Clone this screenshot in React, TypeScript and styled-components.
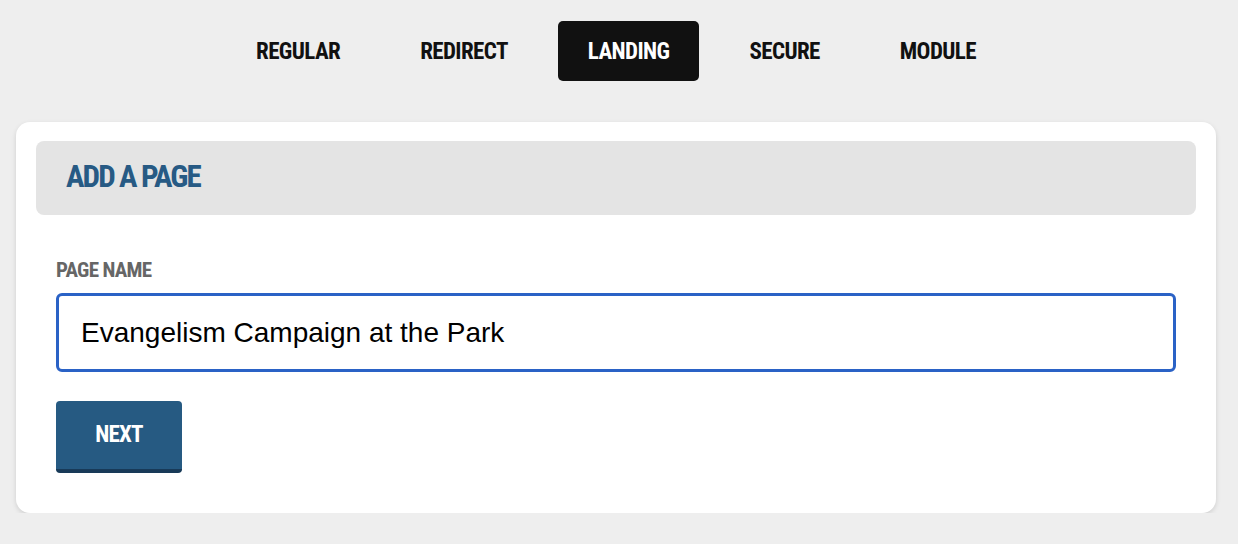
import React, { useEffect, useRef } from "react";
import styled, { createGlobalStyle } from "styled-components";

const GlobalStyle = createGlobalStyle`
  * { box-sizing: border-box; }
  body {
    margin: 0;
    background: #eeeeee;
    font-family: "Roboto Condensed", "Liberation Sans", sans-serif;
  }
`;

const Page = styled.div`
  display: flex;
  flex-direction: column;
  padding: 21px 22px 0 16px;
`;

const TabBar = styled.nav`
  display: flex;
  justify-content: center;
  gap: 20px;
`;

const Tab = styled.button<{ $active?: boolean }>`
  height: 60px;
  padding: 0 30px;
  border: 0;
  border-radius: 5px;
  background: ${(p) => (p.$active ? "#111111" : "transparent")};
  color: ${(p) => (p.$active ? "#ffffff" : "#111111")};
  font-family: "Roboto Condensed", "Liberation Sans", sans-serif;
  font-weight: 700;
  font-size: 23px;
  letter-spacing: -0.6px;
  text-transform: uppercase;
  cursor: pointer;
`;

const Card = styled.section`
  margin-top: 41px;
  background: #ffffff;
  border-radius: 14px;
  box-shadow: 0 2px 5px rgba(0, 0, 0, 0.13);
  padding: 19px 20px 40px;
  display: flex;
  flex-direction: column;
`;

const CardHeader = styled.header`
  height: 74px;
  background: #e4e4e4;
  border-radius: 8px;
  display: flex;
  align-items: center;
  padding: 0 30px 3px;
`;

const Title = styled.h2`
  margin: 0;
  color: #275a84;
  font-family: "Roboto Condensed", "Liberation Sans", sans-serif;
  font-weight: 700;
  font-size: 31px;
  letter-spacing: -1.9px;
  text-transform: uppercase;
`;

const Form = styled.form`
  display: flex;
  flex-direction: column;
  align-items: flex-start;
  padding: 43px 20px 0;
`;

const Label = styled.label`
  color: #666666;
  font-weight: 700;
  font-size: 21px;
  line-height: 24px;
  letter-spacing: -0.7px;
  text-transform: uppercase;
`;

const TextInput = styled.input`
  margin-top: 11px;
  width: 100%;
  height: 79px;
  border: 3px solid #2a62c6;
  border-radius: 6px;
  padding: 0 22px;
  font-family: "Liberation Sans", Arial, sans-serif;
  font-size: 28px;
  color: #000000;
  caret-color: #000000;
  outline: none;
  background: #ffffff;
`;

const NextButton = styled.button`
  margin-top: 29px;
  width: 126px;
  height: 72px;
  border: 0;
  border-bottom: 4px solid #183a58;
  border-radius: 4px;
  background: #265a82;
  color: #ffffff;
  font-family: "Roboto Condensed", "Liberation Sans", sans-serif;
  font-weight: 700;
  font-size: 23px;
  letter-spacing: -0.8px;
  text-transform: uppercase;
  padding: 0 0 2px;
  cursor: pointer;
`;

const tabs = ["Regular", "Redirect", "Landing", "Secure", "Module"];

export default function App() {
  const inputRef = useRef<HTMLInputElement>(null);
  useEffect(() => {
    const el = inputRef.current;
    if (el) {
      el.focus();
      const n = el.value.length;
      el.setSelectionRange(n, n);
    }
  }, []);

  return (
    <>
      <GlobalStyle />
      <Page>
        <TabBar>
          {tabs.map((t) => (
            <Tab key={t} type="button" $active={t === "Landing"}>
              {t}
            </Tab>
          ))}
        </TabBar>
        <Card>
          <CardHeader>
            <Title>Add a Page</Title>
          </CardHeader>
          <Form onSubmit={(e) => e.preventDefault()}>
            <Label htmlFor="page-name">Page Name</Label>
            <TextInput
              id="page-name"
              ref={inputRef}
              defaultValue="Evangelism Campaign at the Park"
            />
            <NextButton type="submit">Next</NextButton>
          </Form>
        </Card>
      </Page>
    </>
  );
}
